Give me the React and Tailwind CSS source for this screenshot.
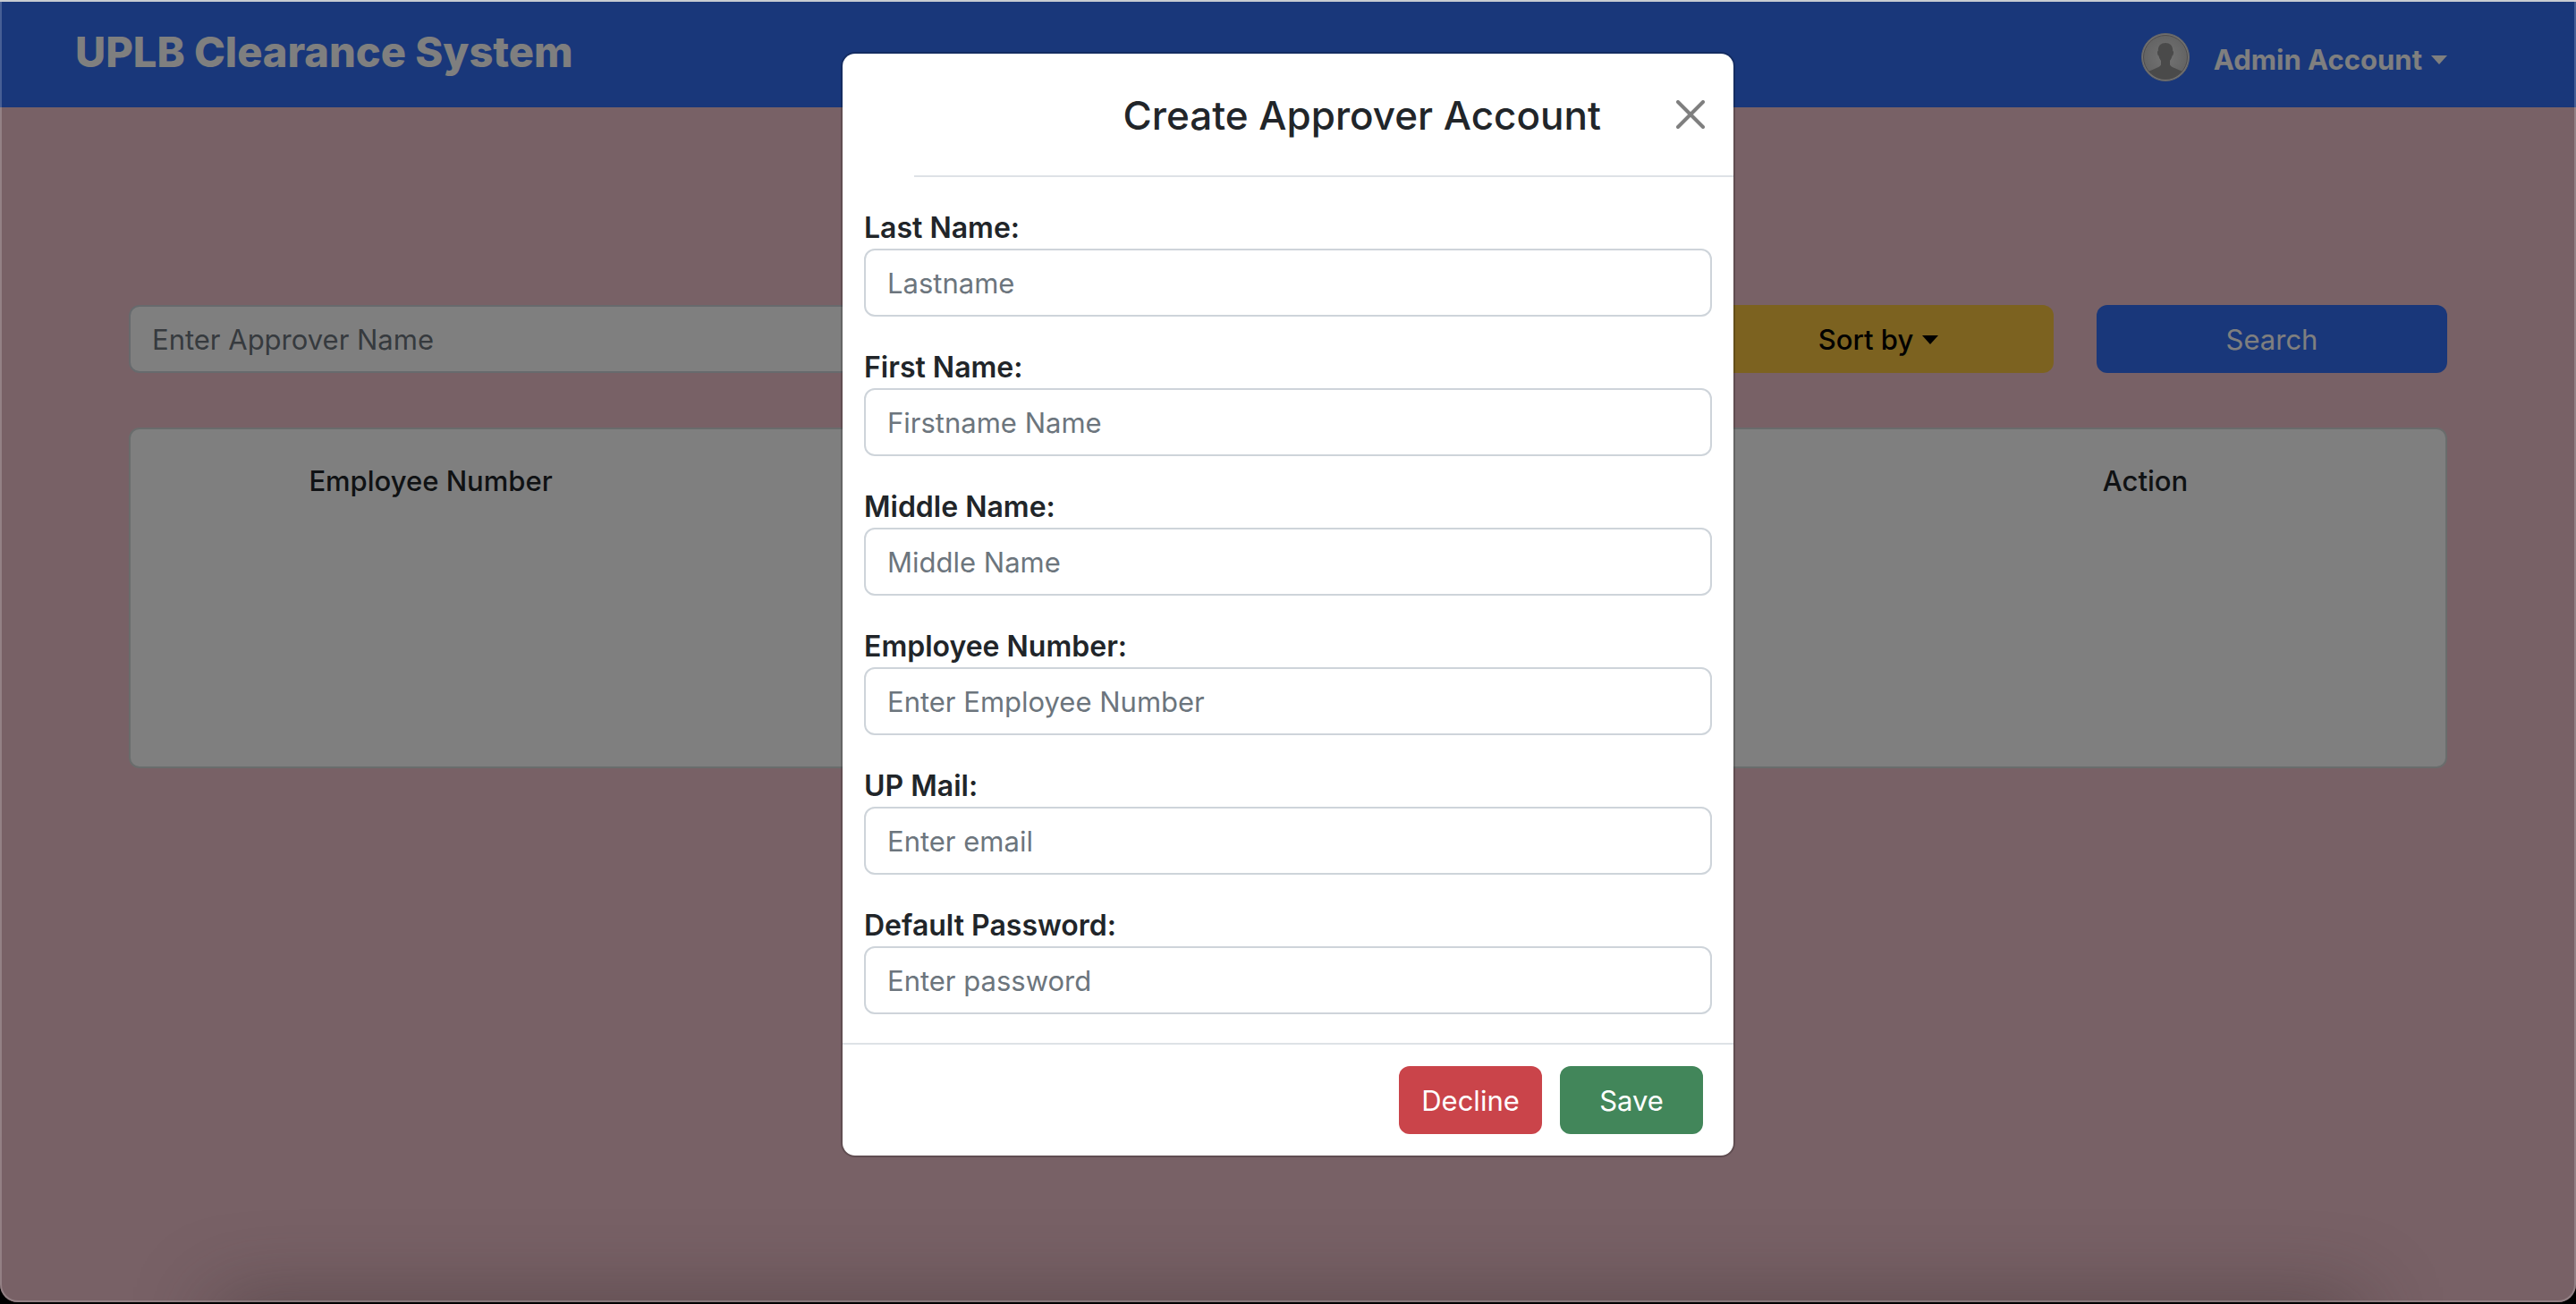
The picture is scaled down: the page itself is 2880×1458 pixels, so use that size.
const fields = [
  { id: "last-name", label: "Last Name:", placeholder: "Lastname", type: "text" },
  { id: "first-name", label: "First Name:", placeholder: "Firstname Name", type: "text" },
  { id: "middle-name", label: "Middle Name:", placeholder: "Middle Name", type: "text" },
  { id: "employee-number", label: "Employee Number:", placeholder: "Enter Employee Number", type: "text" },
  { id: "up-mail", label: "UP Mail:", placeholder: "Enter email", type: "email" },
  { id: "default-password", label: "Default Password:", placeholder: "Enter password", type: "password" },
];

const inputClass =
  "h-[76px] w-full rounded-xl border-2 border-[#ced4da] bg-white px-6 text-[31px] text-[#212529] placeholder:text-[#6c757d] outline-none";

function Caret() {
  return (
    <svg className="h-[10px] w-[18px]" viewBox="0 0 18 10" fill="currentColor" aria-hidden="true">
      <path d="M0 0h18L9 10z" />
    </svg>
  );
}

function Avatar() {
  return (
    <svg className="size-14" viewBox="0 0 56 56" aria-hidden="true">
      <defs>
        <radialGradient id="avatar-fill">
          <stop offset="0" stopColor="#e8e8e8" />
          <stop offset="1" stopColor="#c8c8c8" />
        </radialGradient>
        <clipPath id="avatar-disc">
          <circle cx="28" cy="28" r="24.500" />
        </clipPath>
      </defs>
      <circle cx="28" cy="28" r="26.500" fill="#e4e4e4" stroke="#c8c8c8" />
      <circle cx="28" cy="28" r="24.500" fill="url(#avatar-fill)" stroke="#a09a9a" strokeWidth="1" />
      <g clipPath="url(#avatar-disc)" fill="#949494">
        <path d="M28 12c5 0 8.500 3 8.200 9 .9.200 1 1.200.8 2.600-.2 1.600-.6 2.600-1.500 3-.5 2.400-1.500 4-2.500 5.400v4.500c.8 1.700 2.500 2.500 5 3.500l8 3.500 4 3v10H6V46.500l4-3 8-3.500c2.500-1 4.200-1.800 5-3.500V32c-1-1.400-2-3-2.500-5.400-.9-.4-1.300-1.400-1.500-3-.2-1.400-.1-2.400.8-2.600C19.500 15 23 12 28 12z" />
      </g>
    </svg>
  );
}

export default function App() {
  return (
    <div className="min-h-screen bg-black font-['Inter',sans-serif] text-[31px] leading-[48px] text-[#212529]">
      <div className="relative flex min-h-[calc(100vh-2px)] flex-col overflow-hidden rounded-b-[20px] bg-[#f0c3cc]">
        <header className="flex h-[120px] items-start justify-between bg-[#336ef4] pr-36 pl-[84px] text-white">
          <h1 className="pt-[30px] text-[47px] leading-[56px] font-extrabold">UPLB Clearance System</h1>
          <div className="flex items-center gap-[26px] pt-9">
            <Avatar />
            <button type="button" className="flex items-center gap-2.5 pt-1.5 font-bold">
              Admin Account
              <Caret />
            </button>
          </div>
        </header>

        <main className="px-36 pt-[221px]">
          <div className="grid grid-cols-[1fr_392px_392px] gap-12">
            <input aria-label="Approver name" className={inputClass} placeholder="Enter Approver Name" />
            <button type="button" className="flex h-[76px] items-center justify-center gap-2.5 rounded-xl bg-[#f8c440] pt-0.5 font-medium text-black">
              Sort by
              <Caret />
            </button>
            <button type="button" className="h-[76px] rounded-xl bg-[#336ef4] pt-0.5 text-white">
              Search
            </button>
          </div>
          <div className="mt-[61px] h-[381px] rounded-xl border-2 border-[#d3d9d9] bg-white p-4">
            <table className="w-full table-fixed">
              <thead>
                <tr>
                  <th scope="col" className="pt-[18px] font-medium">Employee Number</th>
                  <td />
                  <td />
                  <th scope="col" className="pt-[18px] font-medium">Action</th>
                </tr>
              </thead>
            </table>
          </div>
        </main>

        <div className="absolute inset-0 bg-black/50" />
        <div className="absolute -bottom-14 left-[260px] right-[260px] h-10 shadow-[0_0_90px_20px_rgba(50,40,40,0.42)]" />
        <div className="absolute inset-0 rounded-b-[20px] border-2 border-t-0 border-white/20" />
        <div className="absolute inset-x-0 top-0 h-0.5 bg-[#c8ccd2]" />

        <div className="absolute inset-0 flex items-start justify-center pt-[58px]">
          <section
            role="dialog"
            aria-modal="true"
            aria-labelledby="dialog-title"
            className="w-[1000px] rounded-2xl border-2 border-black/20 bg-white bg-clip-padding"
          >
            <div className="ml-20 flex h-[138px] items-center justify-end gap-[84px] border-b-2 border-[#dee2e6] pr-8">
              <h2 id="dialog-title" className="pt-0.5 text-[44px] leading-[72px] font-medium">Create Approver Account</h2>
              <button type="button" aria-label="Close" className="text-black/50">
                <svg className="size-8" viewBox="0 0 32 32" fill="none" stroke="currentColor" strokeWidth="4" strokeLinecap="round" aria-hidden="true">
                  <path d="M2 2l28 28M30 2L2 30" />
                </svg>
              </button>
            </div>
            <form className="flex flex-col gap-8 px-6 py-8">
              {fields.map((f) => (
                <div key={f.id}>
                  <label htmlFor={f.id} className="block pt-0.5 text-[32px] leading-[46px] font-semibold">{f.label}</label>
                  <input id={f.id} type={f.type} placeholder={f.placeholder} className={inputClass} />
                </div>
              ))}
            </form>
            <div className="flex justify-end gap-5 border-t-2 border-[#dee2e6] py-6 pr-[34px] text-white">
              <button type="button" className="h-[76px] w-40 rounded-xl bg-[#ca444a] pt-0.5">Decline</button>
              <button type="button" className="h-[76px] w-40 rounded-xl bg-[#42865a] pt-0.5">Save</button>
            </div>
          </section>
        </div>
      </div>
    </div>
  );
}
